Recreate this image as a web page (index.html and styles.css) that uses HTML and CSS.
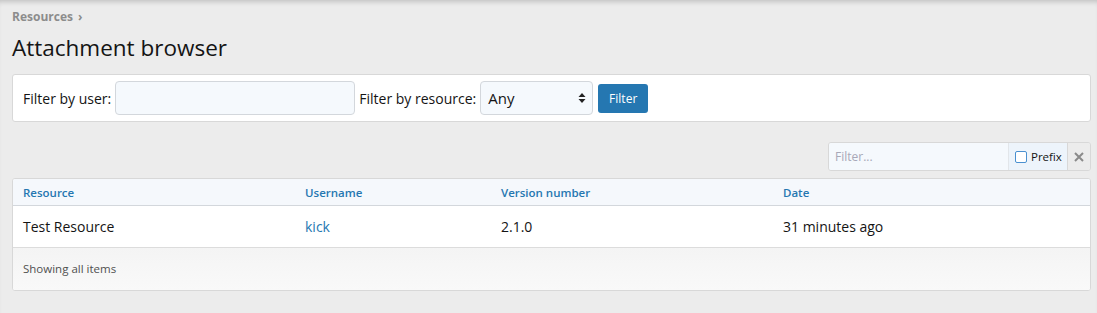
FILE: index.html
```html
<!DOCTYPE html>
<html>
<head>
  <meta charset="UTF-8">
  <title>Attachment browser</title>
  <link rel="stylesheet" href="styles.css">
</head>
<body>
  <div class="page">
    <div class="crumbs"><a href="#">Resources</a> <span class="crumb-arrow">&rsaquo;</span></div>
    <h1 class="title">Attachment browser</h1>

    <form class="block filter-bar">
      <label>Filter by user:</label>
      <input type="text" class="input user-input">
      <label>Filter by resource:</label>
      <div class="select">
        <span>Any</span>
        <svg width="8" height="12" viewBox="0 0 8 12"><path d="M4 1 L7.5 5 H0.5 Z M4 11 L7.5 7 H0.5 Z" fill="#222"/></svg>
      </div>
      <button type="button" class="button">Filter</button>
    </form>

    <div class="quick-row">
      <div class="quick-filter">
        <input type="text" class="quick-input" placeholder="Filter...">
        <label class="prefix"><span class="check"></span>Prefix</label>
        <span class="clear">
          <svg width="10" height="10" viewBox="0 0 10 10"><path d="M1 1 L9 9 M9 1 L1 9" stroke="#8a8a8a" stroke-width="2"/></svg>
        </span>
      </div>
    </div>

    <div class="block list">
      <table class="data">
        <thead>
          <tr>
            <th class="c1">Resource</th>
            <th class="c2">Username</th>
            <th class="c3">Version number</th>
            <th>Date</th>
          </tr>
        </thead>
        <tbody>
          <tr>
            <td>Test Resource</td>
            <td><a href="#">kick</a></td>
            <td>2.1.0</td>
            <td>31 minutes ago</td>
          </tr>
        </tbody>
      </table>
      <div class="list-footer">Showing all items</div>
    </div>
  </div>
</body>
</html>
```

FILE: styles.css
```css
body {
  margin: 0;
  background: #ececec;
  font-family: "Open Sans", "Noto Sans", sans-serif;
  color: #141414;
  box-shadow: inset 0 5px 5px -3px rgba(0, 0, 0, 0.18);
  min-height: 313px;
}
.page {
  padding: 8px 6px 0 12px;
}
.crumbs {
  font-size: 12px;
  font-weight: bold;
  color: #8c8c8c;
  height: 18px;
  line-height: 18px;
}
.crumbs a {
  color: #8c8c8c;
  text-decoration: none;
}
.crumb-arrow {
  margin-left: 2px;
}
.title {
  font-size: 22.5px;
  font-weight: normal;
  margin: 8px 0 12px;
  line-height: 28px;
}
.block {
  background: #fff;
  border: 1px solid #d8d8d8;
  border-radius: 3px;
}
.filter-bar {
  display: flex;
  align-items: center;
  gap: 4px;
  padding: 6px 10px;
  margin: 0;
  font-size: 14px;
}
.filter-bar label {
  color: #141414;
}
.input {
  box-sizing: border-box;
  height: 34px;
  width: 240px;
  background: #f5f9fd;
  border: 1px solid #d3d7dc;
  border-radius: 4px;
  font: inherit;
}
.select {
  box-sizing: border-box;
  display: flex;
  align-items: center;
  justify-content: space-between;
  height: 34px;
  width: 113px;
  padding: 0 6px 0 7px;
  background: #f5f9fd;
  border: 1px solid #d3d7dc;
  border-radius: 4px;
  font-size: 15px;
}
.button {
  height: 29px;
  width: 50px;
  margin-left: 1px;
  background: #2577b1;
  border: 0;
  border-radius: 3px;
  color: #fff;
  font-family: inherit;
  font-size: 12px;
}
.quick-row {
  display: flex;
  justify-content: flex-end;
  margin: 20px 0 7px;
}
.quick-filter {
  display: flex;
  height: 29px;
  box-sizing: border-box;
  border: 1px solid #d8d8d8;
  border-radius: 3px;
  overflow: hidden;
  font-size: 12px;
}
.quick-input {
  width: 179px;
  border: 0;
  background: #f5f9fd;
  padding: 0 6px;
  font-family: inherit;
  font-size: 12px;
  box-sizing: border-box;
}
.quick-input::placeholder {
  color: #a8a8b8;
}
.prefix {
  box-sizing: border-box;
  width: 60px;
  display: flex;
  align-items: center;
  gap: 4px;
  padding: 0 4px 0 6px;
  background: #edf4fb;
  border-left: 1px solid #e2e6ea;
  border-right: 1px solid #d8d8d8;
  color: #141414;
  font-size: 11.5px;
}
.check {
  flex-shrink: 0;
  width: 10px;
  height: 10px;
  border: 1px solid #4a90d0;
  border-radius: 2px;
  background: #fff;
}
.clear {
  display: flex;
  align-items: center;
  justify-content: center;
  width: 22px;
  background: #ececec;
}
.list {
  overflow: hidden;
}
.data {
  width: 100%;
  border-collapse: collapse;
}
.data th {
  text-align: left;
  font-size: 11.5px;
  font-weight: 600;
  color: #2577b1;
  background: #f5f8fc;
  height: 26px;
  padding: 0 10px;
  border-bottom: 1px solid #d3d7dc;
}
.data td {
  font-size: 14px;
  height: 41px;
  padding: 0 10px;
  border-bottom: 1px solid #dcdcdc;
}
.data td a {
  color: #2577b1;
  text-decoration: none;
}
.c1 { width: 262px; }
.c2 { width: 176px; }
.c3 { width: 262px; }
.list-footer {
  height: 42px;
  line-height: 42px;
  padding: 0 10px;
  font-size: 11.5px;
  color: #505050;
  background: linear-gradient(#f4f4f4, #f9f9f9);
}
```
